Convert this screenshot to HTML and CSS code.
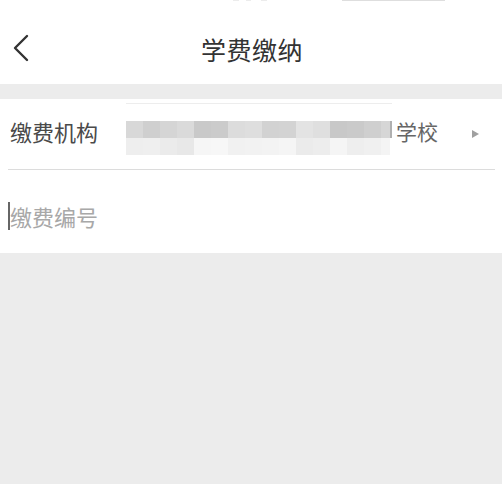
FILE: index.html
```html
<!DOCTYPE html>
<html lang="zh">
<head>
<meta charset="utf-8">
<title>学费缴纳</title>
<link rel="stylesheet" href="styles.css">
</head>
<body>
<div class="page">
  <header class="header">
    <div class="status">
      <span class="dot d1"></span><span class="dot d2"></span><span class="dot d3"></span>
      <span class="sline"></span>
    </div>
    <nav class="nav">
      <span class="back">
        <svg width="18" height="28" viewBox="0 0 18 28"><path d="M15 2 L3 14 L15 26" fill="none" stroke="#333" stroke-width="2.4" stroke-linecap="round" stroke-linejoin="round"/></svg>
      </span>
      <h1 class="title">学费缴纳</h1>
    </nav>
  </header>
  <div class="gap"></div>
  <section class="form">
    <div class="row row-org">
      <span class="label">缴费机构</span>
      <div class="blur">
        <div class="blur-top"></div>
        <div class="blur-row dark">
          <i style="background:#d8d8d8"></i><i style="background:#cfcfcf"></i><i style="background:#d5d5d5"></i><i style="background:#dadada"></i><i style="background:#c9c9c9"></i><i style="background:#cbcbcb"></i><i style="background:#dcdcdc"></i><i style="background:#dedede"></i><i style="background:#d2d2d2"></i><i style="background:#d3d3d3"></i><i style="background:#e3e3e3"></i><i style="background:#dfdfdf"></i><i style="background:#c8c8c8"></i><i style="background:#cacaca"></i><i style="background:#cfcfcf"></i><i style="background:#d6d6d6"></i><i class="edge"></i>
        </div>
        <div class="blur-row light">
          <i style="background:#eeeeee"></i><i style="background:#efefef"></i><i style="background:#ebebeb"></i><i style="background:#e8e8e8"></i><i style="background:#f6f6f6"></i><i style="background:#f7f7f7"></i><i style="background:#f1f1f1"></i><i style="background:#f2f2f2"></i><i style="background:#f3f3f3"></i><i style="background:#f5f5f5"></i><i style="background:#ebebeb"></i><i style="background:#ededed"></i><i style="background:#f5f5f5"></i><i style="background:#eeeeee"></i><i style="background:#f0f0f0"></i><i style="background:#f4f4f4"></i><i class="edge-none"></i>
        </div>
      </div>
      <span class="suffix">学校</span>
      <span class="arrow"></span>
    </div>
    <div class="divider"></div>
    <div class="row row-input">
      <span class="caret"></span>
      <span class="placeholder">缴费编号</span>
    </div>
  </section>
  <div class="rest"></div>
</div>
</body>
</html>
```

FILE: styles.css
```css
* { box-sizing: border-box; }
html, body {
  margin: 0;
  padding: 0;
  background: #ececec;
  font-family: "Noto Sans CJK SC", "Noto Sans", sans-serif;
}
.page {
  width: 502px;
  min-height: 484px;
  display: flex;
  flex-direction: column;
  background: #ececec;
}
.header {
  background: #fff;
  height: 84px;
  display: flex;
  flex-direction: column;
}
.status {
  height: 14px;
  display: flex;
  align-items: flex-start;
}
.dot {
  height: 1px;
  background: #ececec;
}
.d1 { width: 6px; margin-left: 233px; }
.d2 { width: 5px; margin-left: 7px; }
.d3 { width: 6px; margin-left: 10px; }
.sline {
  height: 1px;
  width: 103px;
  margin-left: 75px;
  background: #dedede;
}
.nav {
  height: 70px;
  display: flex;
  align-items: center;
  justify-content: center;
  position: relative;
}
.back {
  position: absolute;
  left: 12px;
  top: 20px;
  width: 18px;
  height: 28px;
  display: flex;
}
.title {
  margin: 0;
  font-size: 25px;
  font-weight: 400;
  color: #333;
  letter-spacing: 0.5px;
  line-height: 30px;
  margin-left: 2px;
}
.gap {
  height: 15px;
  background: #ececec;
}
.form {
  background: #fff;
  height: 154px;
  display: flex;
  flex-direction: column;
}
.row {
  display: flex;
  align-items: center;
}
.row-org {
  height: 70px;
  padding-left: 10px;
}
.label {
  width: 116px;
  font-size: 22px;
  color: #4a4a4a;
  line-height: 26px;
  margin-bottom: 6px;
}
.blur {
  align-self: flex-start;
  margin-top: 4px;
  width: 266px;
  display: flex;
  flex-direction: column;
}
.blur-top {
  height: 1px;
  width: 266px;
  background: #ededed;
  margin-bottom: 17px;
}
.blur-row {
  display: grid;
  grid-template-columns: repeat(15, 17px) 9px 2px;
  height: 17px;
}
.blur-row i { display: block; }
.blur-row .edge { background: #b0b0b0; }
.blur-row .edge-none { background: transparent; }
.suffix {
  margin-left: 4px;
  font-size: 21px;
  color: #666;
  line-height: 26px;
  margin-top: -6px;
}
.arrow {
  margin-left: auto;
  margin-right: 23px;
  width: 0;
  height: 0;
  border-left: 7px solid #a0a0a0;
  border-top: 4px solid transparent;
  border-bottom: 4px solid transparent;
}
.divider {
  height: 1px;
  margin: 0 7px 0 8px;
  background: #dcdcdc;
}
.row-input {
  height: 83px;
  padding-top: 9px;
  padding-left: 8px;
}
.caret {
  width: 2px;
  height: 28px;
  background: #666;
}
.placeholder {
  font-size: 22px;
  color: #a8a8a8;
  line-height: 26px;
}
.rest {
  flex: 1;
  background: #ececec;
}
```
